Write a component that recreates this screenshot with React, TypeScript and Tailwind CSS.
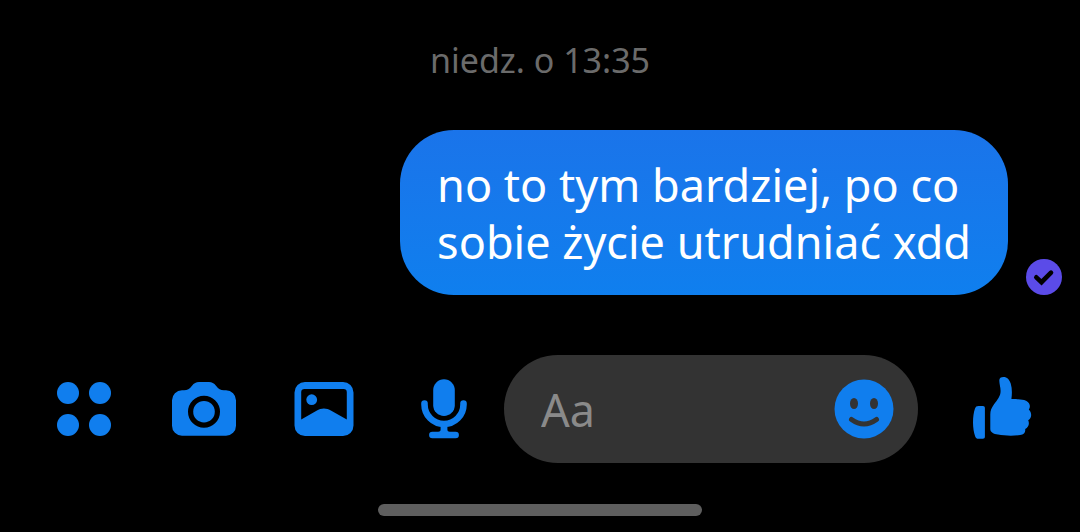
import type { ReactNode } from "react";

function Icon({ children }: { children: ReactNode }) {
  return (
    <svg viewBox="0 0 72 72" className="size-[72px]" fill="currentColor" aria-hidden="true">
      {children}
    </svg>
  );
}

function ToolButton({ label, children }: { label: string; children: ReactNode }) {
  return (
    <button
      type="button"
      aria-label={label}
      className="flex h-[108px] w-[120px] shrink-0 items-center justify-center text-[#107eee]"
    >
      <Icon>{children}</Icon>
    </button>
  );
}

function SentBadge() {
  return (
    <svg viewBox="0 0 36 36" className="size-9 shrink-0" role="img" aria-label="Wysłano">
      <circle cx="18" cy="18" r="18" fill="#5b4be8" />
      <path
        d="M10.3 18.3 15.5 23.2 25 13.7"
        fill="none"
        stroke="#000"
        strokeWidth="4.6"
        strokeLinecap="round"
      />
    </svg>
  );
}

function Composer() {
  return (
    <form className="flex items-center pl-6 pr-[18px]" onSubmit={(e) => e.preventDefault()}>
      <ToolButton label="Więcej">
        <circle cx="20" cy="20" r="11" />
        <circle cx="52" cy="20" r="11" />
        <circle cx="20" cy="52" r="11" />
        <circle cx="52" cy="52" r="11" />
      </ToolButton>
      <ToolButton label="Aparat">
        <path
          fillRule="evenodd"
          d="M14 17.3h2c3.6 0 5.4-1.4 7.8-4.3C26.2 10 28 9 31 9h10c3 0 4.8 1 7.2 4 2.4 2.9 4.2 4.3 7.800 4.3h2a10 10 0 0 1 10 10v25.400a10 10 0 0 1-10 10H14a10 10 0 0 1-10-10V27.300a10 10 0 0 1 10-10ZM36 22.700a16 16 0 1 0 0 32 16 16 0 0 0 0-32Z"
        />
        <circle cx="36" cy="38.7" r="10.8" />
      </ToolButton>
      <ToolButton label="Galeria">
        <path
          fillRule="evenodd"
          d="M17 9h38a10.5 10.5 0 0 1 10.5 10.5v33A10.5 10.5 0 0 1 55 63H17A10.5 10.5 0 0 1 6.5 52.5v-33A10.5 10.5 0 0 1 17 9ZM16.5 16a3.300 3.300 0 0 0-3.300 3.300v27.200L28.500 37.700c5-2.800 9.800-2.800 14.800 0l15.500 8.800V19.300a3.300 3.300 0 0 0-3.300-3.300Z"
        />
        <circle cx="23.7" cy="26.7" r="5.4" />
      </ToolButton>
      <ToolButton label="Nagraj wiadomość głosową">
        <rect x="25.2" y="6.3" width="21.6" height="36.7" rx="10.8" />
        <path
          d="M16.5 30.5v1a19.5 19.5 0 0 0 39 0v-1M24.4 62h23.2"
          fill="none"
          stroke="currentColor"
          strokeWidth="6.6"
          strokeLinecap="round"
        />
        <path d="M32.6 53h6.8v3.5c0 1.5.8 2.5 2.6 2.5H30c1.8 0 2.6-1 2.6-2.5Z" />
      </ToolButton>

      <div className="flex h-[108px] min-w-0 flex-1 items-center rounded-full bg-[#333333] pl-[37px] pr-6">
        <input
          type="text"
          aria-label="Wiadomość"
          placeholder="Aa"
          className="h-[68px] min-w-0 flex-1 bg-transparent text-[45px] text-white outline-none placeholder:text-[#8a8a8a]"
        />
        <button type="button" aria-label="Emoji" className="shrink-0 text-[#107eee]">
          <svg viewBox="0 0 60 60" className="size-[60px]" fill="currentColor" aria-hidden="true">
            <circle cx="30" cy="30" r="29.5" />
            <g className="text-[#333333]">
              <ellipse cx="20" cy="24.5" rx="4" ry="5.6" />
              <ellipse cx="40" cy="24.5" rx="4" ry="5.6" />
              <path
                d="M17.5 40.5q12.5 9 25 0"
                fill="none"
                stroke="currentColor"
                strokeWidth="5"
                strokeLinecap="round"
              />
            </g>
          </svg>
        </button>
      </div>

      <div className="ml-6 flex">
        <ToolButton label="Lubię to">
          <path d="M12.500 33h4.400c1.300 0 2 .8 2 2v28.700c0 1.300-.7 2-2 2h-4.400c-1.700 0-2.700-.7-3.300-2.300C6.400 56 6.300 43 9 35.600c.6-1.800 1.700-2.600 3.500-2.600Z" />
          <path d="M37.600 4C41 4 43.500 6.700 44.700 10.500c1.500 5 1.400 10 .7 15.600 4-.1 9.200.1 12.700 1 5 1.300 7.300 5.800 4.700 9.500 3.200 3 3.300 8.200-.6 10.700 1.600 3.300.3 7.200-3 8.600.5 3.700-1.300 5.700-5 6.200-7 .9-15.800.7-22.200-.5-4.300-.8-7.700-2.300-7.700-5.700V41.500c0-4.200 1.200-6.600 3.600-10 3.400-4.500 6.700-8.300 6.700-13.500 0-3.700-1.300-7-1.300-10.500C33.300 5 34.800 4 37.600 4Z" />
        </ToolButton>
      </div>
    </form>
  );
}

export default function App() {
  return (
    <main
      lang="pl"
      className="flex min-h-screen flex-col bg-black font-['Noto_Sans',sans-serif]"
    >
      <time className="pt-9 text-center text-[34px] leading-[48px] text-[#6b6b6b]">
        niedz. o 13:35
      </time>

      <section className="mt-[46px] flex items-end justify-end gap-[18px] pl-6 pr-[18px]">
        <p className="rounded-[54px] bg-linear-to-b from-[#1a74ea] to-[#0f7fee] px-[37px] pt-[26px] pb-[25px] text-[45px] leading-[57px] text-white">
          no to tym bardziej, po co
          <br />
          sobie życie utrudniać xdd
        </p>
        <SentBadge />
      </section>

      <footer className="mt-[60px] flex flex-col">
        <Composer />
        <div className="mt-[41px] mb-4 h-3 w-[30%] self-center rounded-full bg-[#5e5e5e]" />
      </footer>
    </main>
  );
}
